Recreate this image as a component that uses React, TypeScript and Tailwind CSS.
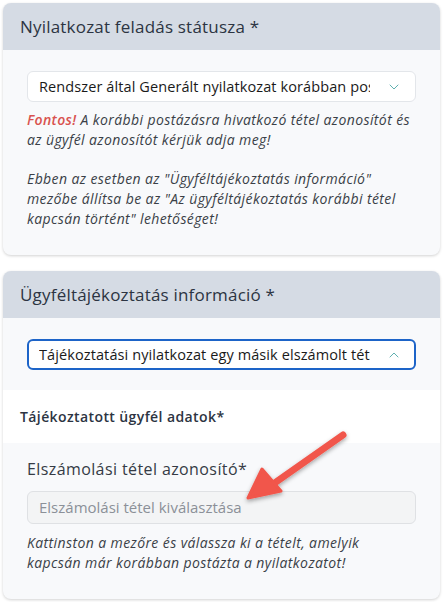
import { ChevronDown, ChevronUp } from "lucide-react";

const font = { fontFamily: '"Open Sans", "Liberation Sans", sans-serif' };

function CardHeader({ title }: { title: string }) {
  return (
    <div className="flex h-[47px] items-center rounded-t-lg bg-[#d5dbe4] px-[17px] text-[17px] tracking-[0.2px] text-[#2c3442]">
      {title}
    </div>
  );
}

function SelectBox({ value, open }: { value: string; open?: boolean }) {
  return (
    <div
      className={
        open
          ? "flex h-[31px] items-center rounded-md border-2 border-[#1d64c8] bg-white pl-[10px] pr-[12px]"
          : "flex h-[31px] items-center rounded-md border border-[#e3e6ea] bg-white pl-[11px] pr-[13px]"
      }
    >
      <span className="flex-1 overflow-hidden whitespace-nowrap text-[14.5px] tracking-[0.1px] text-[#1a1a1a]">
        {value}
      </span>
      {open ? (
        <ChevronUp className="ml-4 h-4 w-4 shrink-0 text-[#5fb0b0]" strokeWidth={1.5} />
      ) : (
        <ChevronDown className="ml-4 h-4 w-4 shrink-0 text-[#5fb0b0]" strokeWidth={1.5} />
      )}
    </div>
  );
}

export default function App() {
  return (
    <div className="relative min-h-[602px] w-[443px] bg-white px-[3px] pt-[3px]" style={font}>
      {/* Card 1 */}
      <div className="rounded-lg bg-[#f8f9fb] shadow-[0_1px_3px_rgba(0,0,0,0.18)]">
        <CardHeader title="Nyilatkozat feladás státusza *" />
        <div className="px-6 pb-[26px] pt-[21px]">
          <SelectBox value="Rendszer által Generált nyilatkozat korábban postázott tételhez" />
          <div className="mt-[8px] text-[14px] italic leading-[20px] tracking-[0.4px] text-[#3a3f47]">
            <p>
              <span className="font-semibold text-[#d9534f]">Fontos!</span> A korábbi postázásra hivatkozó tétel
              azonosítót és
              <br />
              az ügyfél azonosítót kérjük adja meg!
            </p>
            <p className="mt-[19px]">
              Ebben az esetben az "Ügyféltájékoztatás információ"
              <br />
              mezőbe állítsa be az "Az ügyféltájékoztatás korábbi tétel
              <br />
              kapcsán történt" lehetőséget!
            </p>
          </div>
        </div>
      </div>

      {/* Card 2 */}
      <div className="mt-4 rounded-lg bg-[#f8f9fb] shadow-[0_1px_3px_rgba(0,0,0,0.18)]">
        <CardHeader title="Ügyféltájékoztatás információ *" />
        <div className="px-6 pb-[20px] pt-[21px]">
          <SelectBox value="Tájékoztatási nyilatkozat egy másik elszámolt tételhez kapcsolódik" open />
        </div>
        <div className="flex h-[53px] items-center bg-white px-[17px] text-[14px] font-semibold tracking-[0.4px] text-[#2c3442]">
          Tájékoztatott ügyfél adatok*
        </div>
        <div className="rounded-b-lg px-6 pb-[26px] pt-[14px]">
          <div className="text-[16px] tracking-[0.4px] text-[#353b45]">Elszámolási tétel azonosító*</div>
          <div className="mt-[10px] flex h-[33px] items-center rounded-md border border-[#dfe1e4] bg-[#f3f4f5] px-[11px] text-[15px] text-[#8b9098]">
            Elszámolási tétel kiválasztása
          </div>
          <p className="mt-[9px] text-[14px] italic leading-[20px] tracking-[0.4px] text-[#3a3f47]">
            Kattinston a mezőre és válassza ki a tételt, amelyik
            <br />
            kapcsán már korábban postázta a nyilatkozatot!
          </p>
        </div>
      </div>

      {/* Annotation arrow */}
      <svg className="pointer-events-none absolute left-[236px] top-[424px]" width="120" height="90" viewBox="0 0 120 90">
        <defs>
          <filter id="sh" x="-20%" y="-20%" width="140%" height="140%">
            <feDropShadow dx="0" dy="2" stdDeviation="2" floodColor="#000" floodOpacity="0.35" />
          </filter>
        </defs>
        <g filter="url(#sh)" fill="#f1564b" stroke="#f1564b" strokeLinejoin="round" strokeLinecap="round">
          <line x1="107" y1="11" x2="40" y2="58" strokeWidth="7" />
          <polygon points="12,74 26,45 45,67" strokeWidth="3" />
        </g>
      </svg>
    </div>
  );
}
